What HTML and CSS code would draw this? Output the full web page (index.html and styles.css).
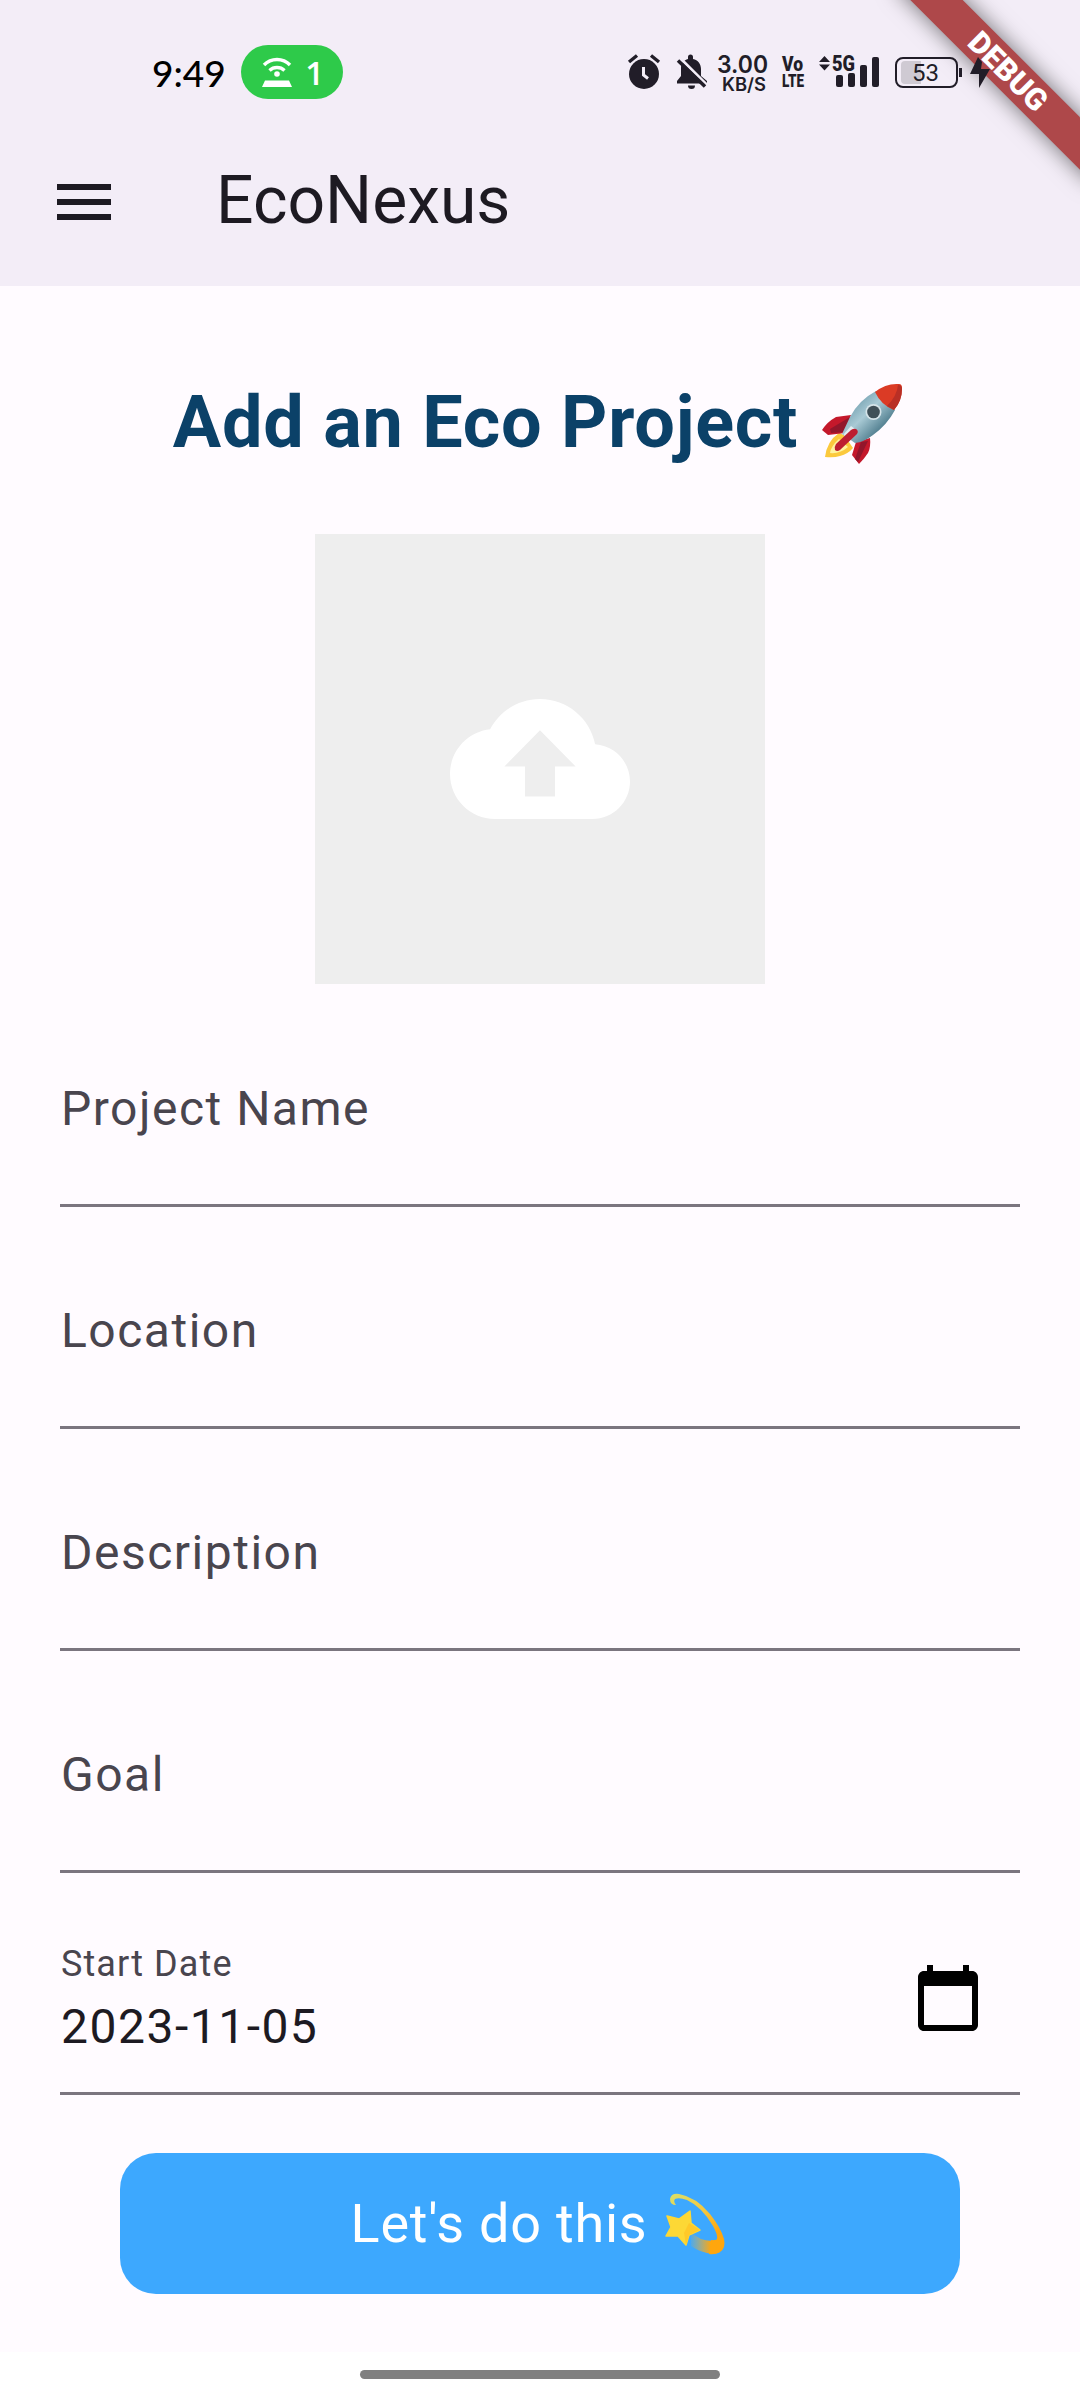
FILE: index.html
```html
<!DOCTYPE html>
<html lang="en">
<head>
  <meta charset="UTF-8" />
  <title>EcoNexus</title>
  <link rel="stylesheet" href="styles.css">
</head>
<body>
  <header class="header">
    <div class="status-bar">
      <span class="clock">9:49</span>
      <div class="hotspot">
        <svg width="30" height="32" viewBox="0 0 30 32">
          <path d="M2 9a18 18 0 0 1 26 0M7.500 14.500a11 11 0 0 1 15 0" fill="none" stroke="#fff" stroke-width="3.400"/>
          <circle cx="15" cy="18" r="2.800" fill="#fff"/>
          <path d="M3 24.500h24l3 6.500H0z" fill="#fff"/>
        </svg>
        <span>1</span>
      </div>

      <div class="status-icons">
        <svg width="38" height="54" viewBox="0 0 38 54">
          <circle cx="18" cy="29" r="15"/>
          <path d="M3 17l8-6.500M33 17l-8-6.500" class="stroke" stroke-width="3.400"/>
          <path d="M17.500 22v8l4.500 3.500" fill="none" stroke="#f3edf7" stroke-width="3"/>
        </svg>
        <svg width="34" height="54" viewBox="0 0 34 54">
          <path d="M3 38.500v-2.500l4-5v-8c0-5 3-8 7-9v-2a2.500 2.500 0 0 1 5 0v2c5 1 8 5 8 10v7l6 5v2.500z"/>
          <path d="M14 40.500h7a3.500 3.500 0 0 1-7 0z"/>
          <path d="M6 13l28 28" stroke="#f3edf7" stroke-width="3"/>
          <path d="M4 15.500l27 26" class="stroke" stroke-width="3.500"/>
        </svg>
        <svg width="50" height="54" viewBox="0 0 50 54" class="narrow">
          <text x="-1" y="28" font-size="24" textLength="51" lengthAdjust="spacingAndGlyphs">3.00</text>
          <text x="4" y="46" font-size="18" textLength="44" lengthAdjust="spacingAndGlyphs">KB/S</text>
        </svg>
        <svg width="30" height="54" viewBox="0 0 30 54" class="condensed">
          <text x="4" y="26" font-size="20" textLength="21" lengthAdjust="spacingAndGlyphs">Vo</text>
          <text x="4" y="42" font-size="19" textLength="22" lengthAdjust="spacingAndGlyphs">LTE</text>
        </svg>
        <svg width="62" height="54" viewBox="0 0 62 54" class="condensed">
          <path d="M1 17l5.500-6 5.500 6zM1 19.500h11l-5.500 6z"/>
          <text x="14" y="26" font-size="22" textLength="23" lengthAdjust="spacingAndGlyphs">5G</text>
          <rect x="18" y="30" width="7" height="12" rx="2"/>
          <rect x="30" y="28" width="7" height="14" rx="2"/>
          <rect x="42" y="20" width="7" height="22" rx="2"/>
          <rect x="54" y="12" width="7" height="30" rx="2"/>
        </svg>
        <svg width="68" height="54" viewBox="0 0 68 54" class="battery">
          <rect x="6" y="13" width="61" height="29" rx="7" fill="none" class="stroke" stroke-width="2"/>
          <path d="M15 16h16v23H15q-4 0-4-4V20q0-4 4-4z" fill="#cfcad3"/>
          <path d="M70.500 23v9" class="stroke" stroke-width="3"/>
          <text x="22" y="36" font-size="23" textLength="27" lengthAdjust="spacingAndGlyphs">53</text>
        </svg>
        <svg width="24" height="54" viewBox="0 0 24 54">
          <path d="M10 12L2 29h9v14L22 24h-9l1-7z"/>
        </svg>
      </div>
    </div>

    <div class="app-bar">
      <svg width="72" height="72" viewBox="0 0 24 24">
        <path d="M3 18h18v-2H3v2zm0-5h18v-2H3v2zm0-7v2h18V6H3z"/>
      </svg>
      <span class="app-title">EcoNexus</span>
    </div>
    <div class="debug-corner"><div class="debug-banner">DEBUG</div></div>
  </header>

  <main class="content">
    <h1 class="heading">
      Add an Eco Project
      <svg width="80" height="81" viewBox="0 0 80 81">
        <defs>
          <linearGradient id="hull" x1="0" y1="0" x2="1" y2="1">
            <stop offset="0.250" stop-color="#7fa9b8"/>
            <stop offset="0.450" stop-color="#a9cad5"/>
            <stop offset="0.750" stop-color="#4e7c8d"/>
          </linearGradient>
        </defs>
        <path d="M17 50Q5 58 3 74q9 1 15-1 8-2 13-8L22 52z" fill="#fbc93d"/>
        <path d="M17 56q-8 7-9 14 10 1 18-6z" fill="#fff3a0"/>
        <path d="M29 32l-15 2Q5 39 0 47l6 5 17-2z" fill="#c4182b"/>
        <path d="M28 34L8 46l1 4 14-1z" fill="#92162b"/>
        <path d="M48 55q1 9-2 15-4 6-9 11l-7-9 4-13z" fill="#c4182b"/>
        <path d="M46 58L36 79l-3-3 6-17z" fill="#92162b"/>
        <path d="M54 8Q37 17 28 34l-8 17 13 9q9-1 18-8 14-10 22-25z" fill="url(#hull)"/>
        <path d="M53 9Q64 0 77 1q3 0 3 4 0 13-8 22-13-5-19-18z" fill="#db3b25"/>
        <path d="M76 2q4 0 4 4 0 12-8 21l-7-4Q75 13 76 2z" fill="#b92f25"/>
        <circle cx="51.500" cy="29" r="8" fill="#d5e4e9"/>
        <circle cx="51.500" cy="29" r="6.300" fill="#3f5058"/>
        <path d="M22 51l7-8 4 3-9 12z" fill="#e4edf0"/>
        <path d="M34 46q3 2 1 5L18 67q-3 2-5 0-1-3 1-6l15-14q3-2 5-1z" fill="#bd1e31"/>
      </svg>
    </h1>

    <div class="upload">
      <svg width="180" height="180" viewBox="0 0 24 24">
        <path d="M19.350 10.040C18.670 6.590 15.640 4 12 4 9.110 4 6.600 5.640 5.350 8.040 2.340 8.360 0 10.910 0 14c0 3.310 2.690 6 6 6h13c2.760 0 5-2.240 5-5 0-2.640-2.050-4.780-4.650-4.960zM14 13v4h-4v-4H7.250L12 8.150 16.750 13H14z"/>
      </svg>
    </div>

    <form>
      <div class="field"><input type="text" placeholder="Project Name"></div>
      <div class="field"><input type="text" placeholder="Location"></div>
      <div class="field"><input type="text" placeholder="Description"></div>
      <div class="field"><input type="text" placeholder="Goal"></div>
      <div class="field date-field">
        <div class="date-text">
          <label for="startDate">Start Date</label>
          <input type="text" id="startDate" value="2023-11-05">
        </div>
        <svg width="72" height="72" viewBox="0 0 24 24">
          <path d="M20 3h-1V1h-2v2H7V1H5v2H4c-1.100 0-2 .9-2 2v16c0 1.100.9 2 2 2h16c1.100 0 2-.9 2-2V5c0-1.100-.9-2-2-2zm0 18H4V8h16v13z"/>
        </svg>
      </div>

      <button type="button" class="submit-button">
        Let's do this
        <svg width="60" height="62" viewBox="0 0 60 62">
          <defs>
            <linearGradient id="trail" x1="0" y1="0" x2="0.600" y2="1">
              <stop offset="0" stop-color="#d9e06a"/>
              <stop offset="0.500" stop-color="#f5c63c"/>
              <stop offset="0.850" stop-color="#ffa60d"/>
            </linearGradient>
            <linearGradient id="fade" x1="0" y1="0" x2="1" y2="0">
              <stop offset="0" stop-color="#f5b52e" stop-opacity="0.100"/>
              <stop offset="0.700" stop-color="#ffa60d"/>
            </linearGradient>
          </defs>
          <path d="M26 40l10 6q8 3 15 1l4 12q-5 3-13 1-9-2-16-7z" fill="url(#fade)"/>
          <path d="M11 12Q5 12 5 6 6 0 14 1q17 3 31 20 11 14 14 25 2 9-4 13-5 3-11 2l2-14q5 1 6-1 1-4-4-13Q37 14 22 7 14 4 10 6q-2 2 1 6z" fill="url(#trail)"/>
          <path d="M25 18l1 12 9 7-11 5-3 10-8-9-12 0 5-9-4-11 12 3z" fill="#fdd835" stroke="#fdd835" stroke-width="1.500" stroke-linejoin="round"/>
          <path d="M24 30l11 7-11 5-3 10-2-12z" fill="#ffc928"/>
        </svg>
      </button>
    </form>
  </main>

  <footer class="nav-bar"><div class="nav-handle"></div></footer>
</body>
</html>
```
FILE: styles.css
```css
:root {
  --surface: #fffbff;
  --bar: #f3edf7;
  --ink: #1d1a22;
  --muted: #49454e;
  --line: #7b757f;
  --navy: #0b4168;
  --blue: #3da8fe;
}

* {
  box-sizing: border-box;
}

body {
  margin: 0;
  width: 1080px;
  height: 2400px;
  display: flex;
  flex-direction: column;
  background: var(--surface);
  color: var(--ink);
  font-family: Roboto, sans-serif;
  overflow: hidden;
}

svg {
  display: block;
  flex: none;
  overflow: visible;
}

.header {
  position: relative;
  height: 286px;
  background: var(--bar);
}

.status-bar {
  position: relative;
  z-index: 2;
  height: 118px;
  padding: 45px 88px 19px 152px;
  display: flex;
  align-items: center;
}

.clock {
  width: 89px;
  font-family: Lato, sans-serif;
  font-size: 37px;
  font-weight: 500;
  color: #000;
}

.hotspot {
  width: 102px;
  height: 54px;
  padding: 0 19px 0 21px;
  display: flex;
  align-items: center;
  justify-content: space-between;
  border-radius: 27px;
  background: #2eca4a;
  color: #fff;
  font-family: "Open Sans", sans-serif;
  font-size: 33px;
  font-weight: 600;
}

.status-icons {
  margin-left: auto;
  display: flex;
  gap: 10px;
  fill: #211d28;
}

.status-icons .stroke {
  stroke: #211d28;
}

.narrow {
  font-family: Inter, sans-serif;
  font-weight: 600;
}

.condensed {
  font-family: Roboto, sans-serif;
  font-weight: 900;
}

.battery {
  font-family: Roboto, sans-serif;
}

.app-bar {
  height: 168px;
  padding-left: 48px;
  display: flex;
  align-items: center;
  gap: 96px;
  fill: var(--ink);
}

.app-title {
  padding-bottom: 3px;
  font-size: 66px;
  line-height: 84px;
}

.debug-corner {
  position: absolute;
  top: 0;
  right: 0;
  width: 300px;
  height: 286px;
  overflow: hidden;
}

.debug-banner {
  position: absolute;
  top: 53px;
  right: -68px;
  width: 280px;
  height: 37px;
  transform: rotate(45deg);
  background: #ae484a;
  box-shadow: 0 0 22px rgba(0, 0, 0, 0.55);
  color: #fff;
  font-size: 30.6px;
  font-weight: 900;
  line-height: 37px;
  text-align: center;
}

.content {
  flex: 1;
  padding: 95px 60px 0;
}

.heading {
  margin: 0 0 69px;
  padding-right: 5px;
  height: 84px;
  display: flex;
  align-items: center;
  justify-content: center;
  gap: 24px;
  color: var(--navy);
  font-size: 72px;
  font-weight: 700;
  line-height: 84px;
  letter-spacing: 0.75px;
}

.upload {
  width: 450px;
  height: 450px;
  margin: 0 auto 1px;
  display: flex;
  align-items: center;
  justify-content: center;
  background: #eee;
  fill: #fff;
}

.field {
  height: 222px;
  padding: 96px 0 0 1px;
  border-bottom: 3px solid var(--line);
}

.field input {
  display: block;
  width: 100%;
  height: 56px;
  padding: 0;
  border: none;
  outline: none;
  background: none;
  color: var(--ink);
  font-family: inherit;
  font-size: 48px;
  line-height: 56px;
  letter-spacing: 1.5px;
}

.field input::placeholder {
  color: var(--muted);
  opacity: 1;
}

.date-field {
  padding: 70px 36px 0 1px;
  display: flex;
  justify-content: space-between;
}

.date-field svg {
  margin-top: 19px;
  fill: #000;
}

.date-text label {
  display: block;
  margin-bottom: 14px;
  color: var(--muted);
  font-size: 36px;
  line-height: 42px;
  letter-spacing: 1.1px;
}

.submit-button {
  width: 840px;
  height: 141px;
  margin: 58px auto 0;
  padding: 0 4px 0 0;
  display: flex;
  align-items: center;
  justify-content: center;
  gap: 18px;
  border: none;
  border-radius: 36px;
  background: var(--blue);
  color: #fff;
  font-family: inherit;
  font-size: 54px;
  line-height: 64px;
  letter-spacing: 0.75px;
}

.nav-bar {
  height: 48px;
  padding-top: 18px;
  background: #fff;
}

.nav-handle {
  width: 360px;
  height: 9px;
  margin: 0 auto;
  border-radius: 5px;
  background: #808080;
}
```
